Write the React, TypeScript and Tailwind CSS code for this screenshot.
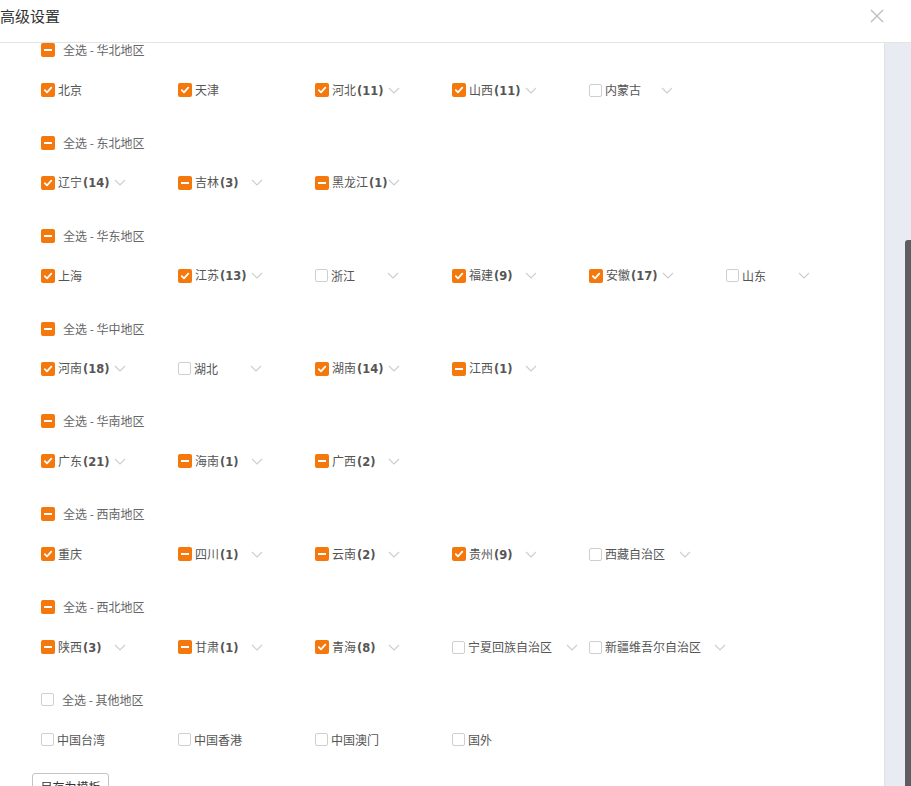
import type { ReactNode } from "react";

type State = "on" | "off" | "part";

type Province = {
  name: string;
  state: State;
  count?: number;
  menu?: boolean;
};

type Region = {
  title: string;
  state: State;
  items: Province[];
};

const regions: Region[] = [
  {
    title: "华北地区",
    state: "part",
    items: [
      { name: "北京", state: "on" },
      { name: "天津", state: "on" },
      { name: "河北", state: "on", count: 11, menu: true },
      { name: "山西", state: "on", count: 11, menu: true },
      { name: "内蒙古", state: "off", menu: true },
    ],
  },
  {
    title: "东北地区",
    state: "part",
    items: [
      { name: "辽宁", state: "on", count: 14, menu: true },
      { name: "吉林", state: "part", count: 3, menu: true },
      { name: "黑龙江", state: "part", count: 1, menu: true },
    ],
  },
  {
    title: "华东地区",
    state: "part",
    items: [
      { name: "上海", state: "on" },
      { name: "江苏", state: "on", count: 13, menu: true },
      { name: "浙江", state: "off", menu: true },
      { name: "福建", state: "on", count: 9, menu: true },
      { name: "安徽", state: "on", count: 17, menu: true },
      { name: "山东", state: "off", menu: true },
    ],
  },
  {
    title: "华中地区",
    state: "part",
    items: [
      { name: "河南", state: "on", count: 18, menu: true },
      { name: "湖北", state: "off", menu: true },
      { name: "湖南", state: "on", count: 14, menu: true },
      { name: "江西", state: "part", count: 1, menu: true },
    ],
  },
  {
    title: "华南地区",
    state: "part",
    items: [
      { name: "广东", state: "on", count: 21, menu: true },
      { name: "海南", state: "part", count: 1, menu: true },
      { name: "广西", state: "part", count: 2, menu: true },
    ],
  },
  {
    title: "西南地区",
    state: "part",
    items: [
      { name: "重庆", state: "on" },
      { name: "四川", state: "part", count: 1, menu: true },
      { name: "云南", state: "part", count: 2, menu: true },
      { name: "贵州", state: "on", count: 9, menu: true },
      { name: "西藏自治区", state: "off", menu: true },
    ],
  },
  {
    title: "西北地区",
    state: "part",
    items: [
      { name: "陕西", state: "part", count: 3, menu: true },
      { name: "甘肃", state: "part", count: 1, menu: true },
      { name: "青海", state: "on", count: 8, menu: true },
      { name: "宁夏回族自治区", state: "off", menu: true },
      { name: "新疆维吾尔自治区", state: "off", menu: true },
    ],
  },
  {
    title: "其他地区",
    state: "off",
    items: [
      { name: "中国台湾", state: "off" },
      { name: "中国香港", state: "off" },
      { name: "中国澳门", state: "off" },
      { name: "国外", state: "off" },
    ],
  },
];

function Box({ state }: { state: State }) {
  if (state === "off") {
    return <span className="h-[13px] w-[13px] shrink-0 rounded-[2px] border border-[#cfcfcf] bg-white" />;
  }
  return (
    <span className="flex h-[14px] w-[14px] shrink-0 items-center justify-center rounded-[2px] bg-[#f5780c]">
      {state === "on" ? (
        <svg width="10" height="10" viewBox="0 0 10 10" fill="none">
          <path d="M1.8 5.2 4 7.3 8.3 2.6" stroke="white" strokeWidth="1.8" strokeLinecap="round" strokeLinejoin="round" />
        </svg>
      ) : (
        <span className="h-[2px] w-[8px] bg-white" />
      )}
    </span>
  );
}

function Chevron() {
  return (
    <svg width="12" height="7" viewBox="0 0 12 7" fill="none" className="shrink-0">
      <path d="M1 1l5 5 5-5" stroke="#cdcdcd" strokeWidth="1.1" />
    </svg>
  );
}

function Item({ p }: { p: Province }) {
  const long = !p.count && p.name.length > 4;
  return (
    <div className="flex h-[14px] items-center">
      <Box state={p.state} />
      <span className={`ml-[3px] min-w-[56px] whitespace-nowrap ${long ? "pr-[14px]" : ""}`}>
        {p.name}
        {p.count !== undefined && (
          <span className="ml-[1px] font-['DejaVu_Sans'] text-[11.5px] font-bold text-[#555]">({p.count})</span>
        )}
      </span>
      {p.menu && <Chevron />}
    </div>
  );
}

function Group({ region }: { region: Region }) {
  return (
    <div className="mb-[38.85px] flex flex-col">
      <div className="flex h-[14px] items-center">
        <Box state={region.state} />
        <span className="ml-[8px] text-[#666]">全选 - {region.title}</span>
      </div>
      <div className="mt-[26px] grid grid-cols-[repeat(6,137px)]">
        {region.items.map((p) => (
          <Item key={p.name} p={p} />
        ))}
      </div>
    </div>
  );
}

function Header({ children }: { children: ReactNode }) {
  return (
    <div className="flex h-[43px] shrink-0 items-start justify-between border-b border-[#e4e4e4] bg-white pr-[27px] pt-[6px]">
      {children}
    </div>
  );
}

export default function App() {
  return (
    <div className="flex h-[786px] w-[911px] flex-col overflow-hidden bg-white font-['Noto_Sans_CJK_SC',sans-serif] text-[12px] leading-[14px] text-[#555]">
      <Header>
        <span className="text-[15px] leading-[20px] text-[#333]">高级设置</span>
        <svg width="14" height="14" viewBox="0 0 14 14" fill="none" className="mt-[3px]">
          <path d="M1 1l12 12M13 1 1 13" stroke="#bdbdbd" strokeWidth="1.4" />
        </svg>
      </Header>
      <div className="flex min-h-0 flex-1">
        <div className="flex w-[884px] flex-col overflow-hidden pl-[41px]">
          {regions.map((r) => (
            <Group key={r.title} region={r} />
          ))}
          <div className="-mt-[13px] -ml-[9px] flex h-[28px] w-[77px] shrink-0 items-center justify-center rounded-[3px] border border-[#c4c4c4] text-[#333]">
            另存为模板
          </div>
        </div>
        <div className="flex w-[27px] flex-col items-end border-l border-[#dfe1ea] bg-[#e9ebf3] pt-[197px]">
          <div className="w-[6px] flex-1 rounded-tl-[3px] bg-[#5e5e62]" />
        </div>
      </div>
    </div>
  );
}
